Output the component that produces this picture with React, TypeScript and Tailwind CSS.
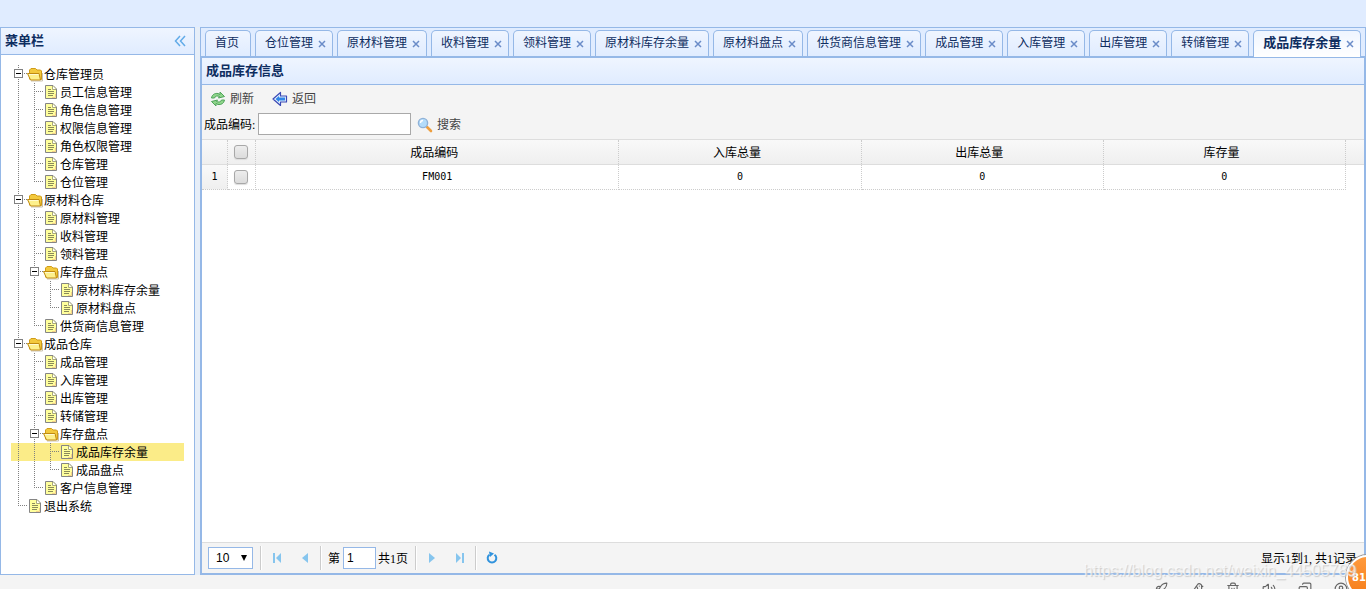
import { useState } from 'react'
import { Bird, CircleUser, Copy, Rocket, Trash2, Volume2 } from 'lucide-react'

type TreeNode = { label: string; children?: TreeNode[] }

const menu: TreeNode[] = [
  {
    label: '仓库管理员',
    children: [
      { label: '员工信息管理' },
      { label: '角色信息管理' },
      { label: '权限信息管理' },
      { label: '角色权限管理' },
      { label: '仓库管理' },
      { label: '仓位管理' },
    ],
  },
  {
    label: '原材料仓库',
    children: [
      { label: '原材料管理' },
      { label: '收料管理' },
      { label: '领料管理' },
      { label: '库存盘点', children: [{ label: '原材料库存余量' }, { label: '原材料盘点' }] },
      { label: '供货商信息管理' },
    ],
  },
  {
    label: '成品仓库',
    children: [
      { label: '成品管理' },
      { label: '入库管理' },
      { label: '出库管理' },
      { label: '转储管理' },
      { label: '库存盘点', children: [{ label: '成品库存余量' }, { label: '成品盘点' }] },
      { label: '客户信息管理' },
    ],
  },
  { label: '退出系统' },
]

const tabs = [
  '首页',
  '仓位管理',
  '原材料管理',
  '收料管理',
  '领料管理',
  '原材料库存余量',
  '原材料盘点',
  '供货商信息管理',
  '成品管理',
  '入库管理',
  '出库管理',
  '转储管理',
  '成品库存余量',
]

const columns = ['成品编码', '入库总量', '出库总量', '库存量']
const rows = [['FM001', '0', '0', '0']]

function FolderIcon() {
  return (
    <svg viewBox="0 0 16 18" className="h-[18px] w-4 shrink-0">
      <path d="M4 16h11.500V8" fill="none" stroke="#c9c2b0" />
      <path d="M2.500 14V5L4 3.500h4.500L10 5h3.500l1 1v8.500H4z" fill="#f3c93c" stroke="#d09c18" />
      <path d="M.5 8.500h11.500l1.500 6.500H3.500z" fill="#fdf08c" stroke="#c08a10" />
      <path d="M2 9.500h9.500" stroke="#fffbd0" />
    </svg>
  )
}

function FileIcon() {
  return (
    <svg viewBox="0 0 16 18" className="h-[18px] w-4 shrink-0">
      <path d="M2.500 2.500h7.500l3.500 3.500v9.500h-11z" fill="#ffff9c" stroke="#858585" />
      <path d="M9.500 3v3.500H13" fill="#fff" stroke="#a9a97c" />
      <path d="M5 6.500h3M5 8.500h6M5 10.500h6M5 12.500h5" stroke="#8a8a5a" />
      <path d="M12.500 11v3.500H9" fill="none" stroke="#f5d08a" />
    </svg>
  )
}

// one 16px guide cell in front of a tree row
function Guide({ kind }: { kind: 'line' | 'join' | 'corner' | 'minus' | 'blank' }) {
  return (
    <svg viewBox="0 0 16 18" className="h-[18px] w-4 shrink-0" shapeRendering="crispEdges">
      {kind !== 'blank' && (
        <path d={kind === 'corner' ? 'M7.5 0V9' : 'M7.5 0V18'} stroke="#808080" strokeDasharray="1 1" />
      )}
      {kind !== 'line' && kind !== 'blank' && <path d="M7 8.5H16" stroke="#808080" strokeDasharray="1 1" />}
      {kind === 'minus' && (
        <>
          <rect x="3.5" y="4.5" width="8" height="8" fill="#fff" stroke="#808080" />
          <path d="M5 8.5h5" stroke="#000" />
        </>
      )}
    </svg>
  )
}

function Tree({ nodes, lines = [] }: { nodes: TreeNode[]; lines?: boolean[] }) {
  return (
    <ul>
      {nodes.map((node, i) => {
        const last = i === nodes.length - 1
        return (
          <li key={node.label}>
            <a
              href="#"
              className={`flex h-[18px] items-center whitespace-nowrap text-xs leading-[18px] text-black ${
                node.label === '成品库存余量' ? 'bg-[#fbec88]' : 'hover:bg-[#eaf2ff]'
              }`}
            >
              {lines.map((on, n) => (
                <Guide key={n} kind={on ? 'line' : 'blank'} />
              ))}
              <Guide kind={node.children ? 'minus' : last ? 'corner' : 'join'} />
              {node.children ? <FolderIcon /> : <FileIcon />}
              <span className="pt-0.5 pl-px">{node.label}</span>
            </a>
            {node.children && <Tree nodes={node.children} lines={[...lines, !last]} />}
          </li>
        )
      })}
    </ul>
  )
}

function Sidebar() {
  return (
    <aside className="flex w-[195px] shrink-0 flex-col border border-[#95b8e7] bg-white">
      <div className="flex h-[27px] shrink-0 items-center justify-between border-b border-[#95b8e7] bg-linear-to-b from-[#eff5ff] to-[#e0ecff] pr-2 pl-1">
        <h2 className="text-[13px] font-bold text-[#0e2d5f]">菜单栏</h2>
        <button type="button" aria-label="收起">
          <svg viewBox="0 0 12 12" className="size-3" fill="none" stroke="#62abe8" strokeWidth="1.5">
            <path d="M6 1L1.500 6 6 11M11 1L6.500 6 11 11" />
          </svg>
        </button>
      </div>
      <nav className="min-h-0 flex-1 overflow-hidden p-2.5">
        <Tree nodes={menu} />
      </nav>
    </aside>
  )
}

function TabBar({ active, onSelect }: { active: string; onSelect: (name: string) => void }) {
  return (
    <div className="flex h-[29px] shrink-0 gap-1 border-b border-[#95b8e7] bg-[#e0ecff] pt-0.5 pl-1">
      {tabs.map((name) => (
        <div
          key={name}
          className={`flex shrink-0 rounded-t-[5px] border border-b-0 border-[#95b8e7] bg-linear-to-b from-[#eff5ff] text-[#0e2d5f] ${
            name === active ? '-mb-px to-white text-[13px] font-bold' : 'to-[#e0ecff] text-xs'
          }`}
        >
          <button
            type="button"
            onClick={() => onSelect(name)}
            className={`h-6 whitespace-nowrap pl-[9px] leading-6 ${name === '首页' ? 'pr-[11px]' : ''}`}
          >
            {name}
          </button>
          {name !== '首页' && (
            <button type="button" aria-label={`关闭${name}`} className="flex h-[26px] w-[19px] items-center justify-center pr-px">
              <svg viewBox="0 0 8 8" className="size-2" stroke="#6a8cc8" strokeWidth="1.500">
                <path d="M1 1l6 6M7 1L1 7" />
              </svg>
            </button>
          )}
        </div>
      ))}
    </div>
  )
}

function RefreshIcon() {
  return (
    <svg viewBox="0 0 16 16" className="size-4" strokeLinejoin="round">
      <path d="M1.500 7C2 3.500 5 2 8 2.500L10 3.500V1l4.500 4.500-6 1.500 1-1.500C7.500 4.500 5 5 4.500 7z" fill="#8fd58b" stroke="#4fa45a" />
      <path d="M14.500 9c-.5 3.500-3.500 5-6.500 4.500L6 12.500V15L1.500 10.500l6-1.500-1 1.500c2 1 4.500.5 5-1.500z" fill="#8fd58b" stroke="#4fa45a" />
    </svg>
  )
}

function BackIcon() {
  return (
    <svg viewBox="0 0 16 16" className="size-4" strokeLinejoin="round">
      <path d="M1 8l7.500-6.500V5h6v6h-6v3.500z" fill="#e3f1ff" stroke="#3a48b4" strokeWidth="1.200" />
      <path d="M3.500 8L7 5v1.500h6v3H7V11z" fill="#2f86e8" />
    </svg>
  )
}

function SearchIcon() {
  return (
    <svg viewBox="0 0 16 16" className="size-4">
      <path d="M10 10l4 4" stroke="#ee9f3f" strokeWidth="2.600" strokeLinecap="round" />
      <circle cx="6" cy="6" r="4.600" fill="#b4dcfa" stroke="#8fb2d8" strokeWidth="1.400" />
      <path d="M3.500 6a2.500 2.500 0 0 1 2.500-2.500" fill="none" stroke="#fff" strokeWidth="1.300" />
    </svg>
  )
}

function Toolbar() {
  return (
    <div className="shrink-0 border-b border-[#ddd] bg-[#f4f4f4] pb-[3px] text-xs text-[#444]">
      <div className="flex h-[27px] items-center gap-[18px] pt-px pl-2">
        <button type="button" className="flex items-center gap-1">
          <RefreshIcon />
          刷新
        </button>
        <button type="button" className="flex items-center gap-1">
          <BackIcon />
          返回
        </button>
      </div>
      <div className="flex h-6 items-center pl-0.5">
        <label htmlFor="code" className="w-[54px] pt-0.5 text-black">
          成品编码:
        </label>
        <input id="code" type="text" className="h-[22px] w-[153px] border border-[#a9a9a9] bg-white px-1 text-black outline-none" />
        <button type="button" className="ml-1.5 flex items-center gap-1 pt-0.5">
          <SearchIcon />
          搜索
        </button>
      </div>
    </div>
  )
}

const box =
  'mr-px mb-px size-3.5 appearance-none rounded-[3px] border border-[#a8a8a8] bg-linear-to-b from-[#ededed] to-[#dcdcdc] shadow-[0_1px_1px_#ddd] checked:to-[#95b8e7]'
const gridRow = 'grid h-[25px] grid-cols-[26px_28px_3fr_2fr_2fr_2fr_18px]'
const cell = 'flex items-center justify-center border-r border-dotted border-[#ccc] font-normal'

function DataGrid() {
  return (
    <div className="min-h-0 flex-1 overflow-hidden bg-white">
      <table className="block w-full text-xs text-black">
        <thead className="block">
          <tr className={`${gridRow} border-b border-[#ddd] bg-linear-to-b from-[#f9f9f9] to-[#efefef]`}>
            <th className={cell}></th>
            <th className={cell}>
              <input type="checkbox" aria-label="全选" className={box} />
            </th>
            {columns.map((name) => (
              <th key={name} scope="col" className={`${cell} pt-px pr-1.5`}>
                {name}
              </th>
            ))}
            <th></th>
          </tr>
        </thead>
        <tbody className="block">
          {rows.map((row, i) => (
            <tr key={row[0]} className={`${gridRow} font-['DejaVu_Sans_Mono',monospace] text-[10px]`}>
              <td className={`${cell} border-b bg-linear-to-b from-[#f9f9f9] to-[#efefef]`}>{i + 1}</td>
              <td className={`${cell} border-b`}>
                <input type="checkbox" aria-label={row[0]} className={box} />
              </td>
              {row.map((value, n) => (
                <td key={n} className={`${cell} border-b`}>
                  {value}
                </td>
              ))}
            </tr>
          ))}
        </tbody>
      </table>
    </div>
  )
}

function Separator() {
  return <span className="mx-px h-6 w-0.5 border-r border-l border-r-white border-l-[#ccc]" />
}

function PageButton({ label, d, bar }: { label: string; d: string; bar?: string }) {
  return (
    <button type="button" aria-label={label} className="flex w-7 items-center justify-center">
      <svg viewBox="0 0 16 16" className="size-4" fill="#86c5ee">
        <path d={d} />
        {bar && <path d={bar} />}
      </svg>
    </button>
  )
}

function Pager() {
  return (
    <div className="flex h-[31px] shrink-0 items-center border-t border-[#ddd] bg-[#f4f4f4] pr-[7px] pl-1.5 text-xs text-black">
      <div className="relative mr-1.5">
        <select
          aria-label="每页条数"
          className="block h-[22px] w-[45px] appearance-none border border-[#95b8e7] bg-white pl-[7px] font-['Liberation_Sans',sans-serif] text-xs outline-none"
        >
          <option>10</option>
          <option>20</option>
          <option>50</option>
        </select>
        <svg viewBox="0 0 6 6" className="pointer-events-none absolute top-2 right-1.5 size-1.5">
          <path d="M0 0h6L3 6z" />
        </svg>
      </div>
      <Separator />
      <PageButton label="首页" d="M12 3v10L7 8z" bar="M4 3h2v10H4z" />
      <PageButton label="上一页" d="M11 3v10L5 8z" />
      <Separator />
      <label htmlFor="page" className="pt-0.5 pl-[5px]">
        第
      </label>
      <input
        id="page"
        type="text"
        defaultValue="1"
        className="mr-0.5 ml-[3px] h-[22px] w-[33px] border border-[#95b8e7] bg-white px-[3px] font-['Liberation_Sans',sans-serif] text-xs outline-none"
      />
      <span className="pt-0.5 pr-1.5">共1页</span>
      <Separator />
      <PageButton label="下一页" d="M5 3v10l6-5z" />
      <PageButton label="末页" d="M4 3v10l5-5z" bar="M10 3h2v10h-2z" />
      <Separator />
      <button type="button" aria-label="刷新" className="flex w-7 items-center justify-center">
        <svg viewBox="0 0 16 16" className="size-4" fill="none" stroke="#3193dd" strokeWidth="2">
          <path d="M10.500 4.700A4.300 4.300 0 1 1 5.500 4.700" />
          <path d="M5 1.500l5 2-4 3.500z" fill="#3193dd" stroke="none" />
        </svg>
      </button>
      <span className="ml-auto pt-0.5">显示1到1, 共1记录</span>
    </div>
  )
}

export default function App() {
  const [active, setActive] = useState('成品库存余量')

  return (
    <div className="relative flex h-screen flex-col overflow-hidden bg-[#f4f4f4] font-['Liberation_Serif','Noto_Sans_CJK_SC',serif]">
      <header className="h-[27px] shrink-0 bg-[#e0ecff]" />
      <div className="flex min-h-0 flex-1 gap-[5px] bg-[#e6eef8]">
        <Sidebar />
        <main className="flex min-w-0 flex-1 flex-col border border-[#95b8e7]">
          <TabBar active={active} onSelect={setActive} />
          <section className="flex min-h-0 flex-1 flex-col border border-[#95b8e7]">
            <h1 className="h-[27px] shrink-0 border-b border-[#95b8e7] bg-linear-to-b from-[#eff5ff] to-[#e0ecff] pl-1 text-[13px] leading-[26px] font-bold text-[#0e2d5f]">
              成品库存信息
            </h1>
            <Toolbar />
            <DataGrid />
            <Pager />
          </section>
        </main>
      </div>

      <footer className="flex h-3.5 shrink-0 items-start justify-end gap-[22px] overflow-hidden pt-[7px] pr-[18px] text-[#666]">
        <Rocket className="size-3.5 shrink-0" />
        <Bird className="size-3.5 shrink-0" />
        <Trash2 className="size-3.5 shrink-0" />
        <Volume2 className="size-3.5 shrink-0" />
        <Copy className="size-3.5 shrink-0 -scale-x-100" />
        <CircleUser className="size-3.5 shrink-0" />
      </footer>

      <div className="absolute -right-6 -bottom-2.5 flex size-11 items-center rounded-full border-2 border-white bg-linear-to-b from-[#ff9a3c] to-[#f57c14] pl-1 font-['DejaVu_Sans',sans-serif] text-[10px] font-bold text-white shadow-[0_0_0_1px_#999]">
        81
      </div>
      <span className="pointer-events-none absolute right-2.5 bottom-2 font-['Liberation_Sans',sans-serif] text-base leading-5 text-white/60 [text-shadow:1px_1px_1px_#ccc]">
        https://blog.csdn.net/weixin_44505789
      </span>
    </div>
  )
}
